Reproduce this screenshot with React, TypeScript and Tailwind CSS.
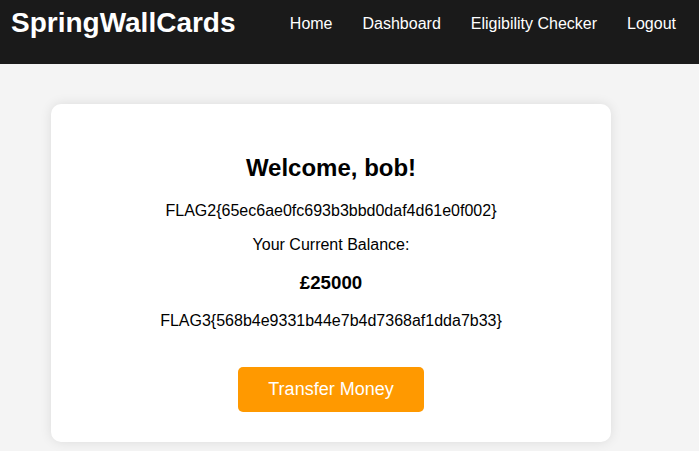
import React from 'react';

const navLinks = ['Home', 'Dashboard', 'Eligibility Checker', 'Logout'];

const App: React.FC = () => {
  return (
    <div className="min-h-[451px] bg-[#f4f4f4] font-['Liberation_Sans',Arial,sans-serif] text-black">
      <header className="flex h-16 items-start justify-between bg-[#1a1a1a] text-white">
        <h1 className="pl-[11px] pt-[7px] text-[28px] font-bold leading-[32px]">SpringWallCards</h1>
        <nav className="flex gap-[30px] pr-[23px] pt-[15px] text-base leading-[18px]">
          {navLinks.map((link) => (
            <a key={link} href="#" className="text-white">
              {link}
            </a>
          ))}
        </nav>
      </header>

      <main className="pb-[10px] pt-10">
        <div className="ml-[51px] w-[560px] rounded-[10px] bg-white px-[30px] pb-[30px] pt-[30px] text-center shadow-[0_0_12px_rgba(0,0,0,0.1)]">
          <h2 className="mb-5 mt-5 text-2xl font-bold leading-[27.6px]">Welcome, bob!</h2>
          <p className="my-4 text-base leading-[18.4px]">FLAG2{'{'}65ec6ae0fc693b3bbd0daf4d61e0f002{'}'}</p>
          <p className="my-4 text-base leading-[18.4px]">Your Current Balance:</p>
          <h3 className="my-[18px] text-[18.7px] font-bold leading-[21.5px]">£25000</h3>
          <p className="my-4 text-base leading-[18.4px]">FLAG3{'{'}568b4e9331b44e7b4d7368af1dda7b33{'}'}</p>
          <div className="mt-[37px]">
            <button className="rounded-[5px] bg-[#ff9900] px-[30px] py-[12px] text-lg leading-[20.7px] text-white">
              Transfer Money
            </button>
          </div>
        </div>
      </main>
    </div>
  );
};

export default App;
